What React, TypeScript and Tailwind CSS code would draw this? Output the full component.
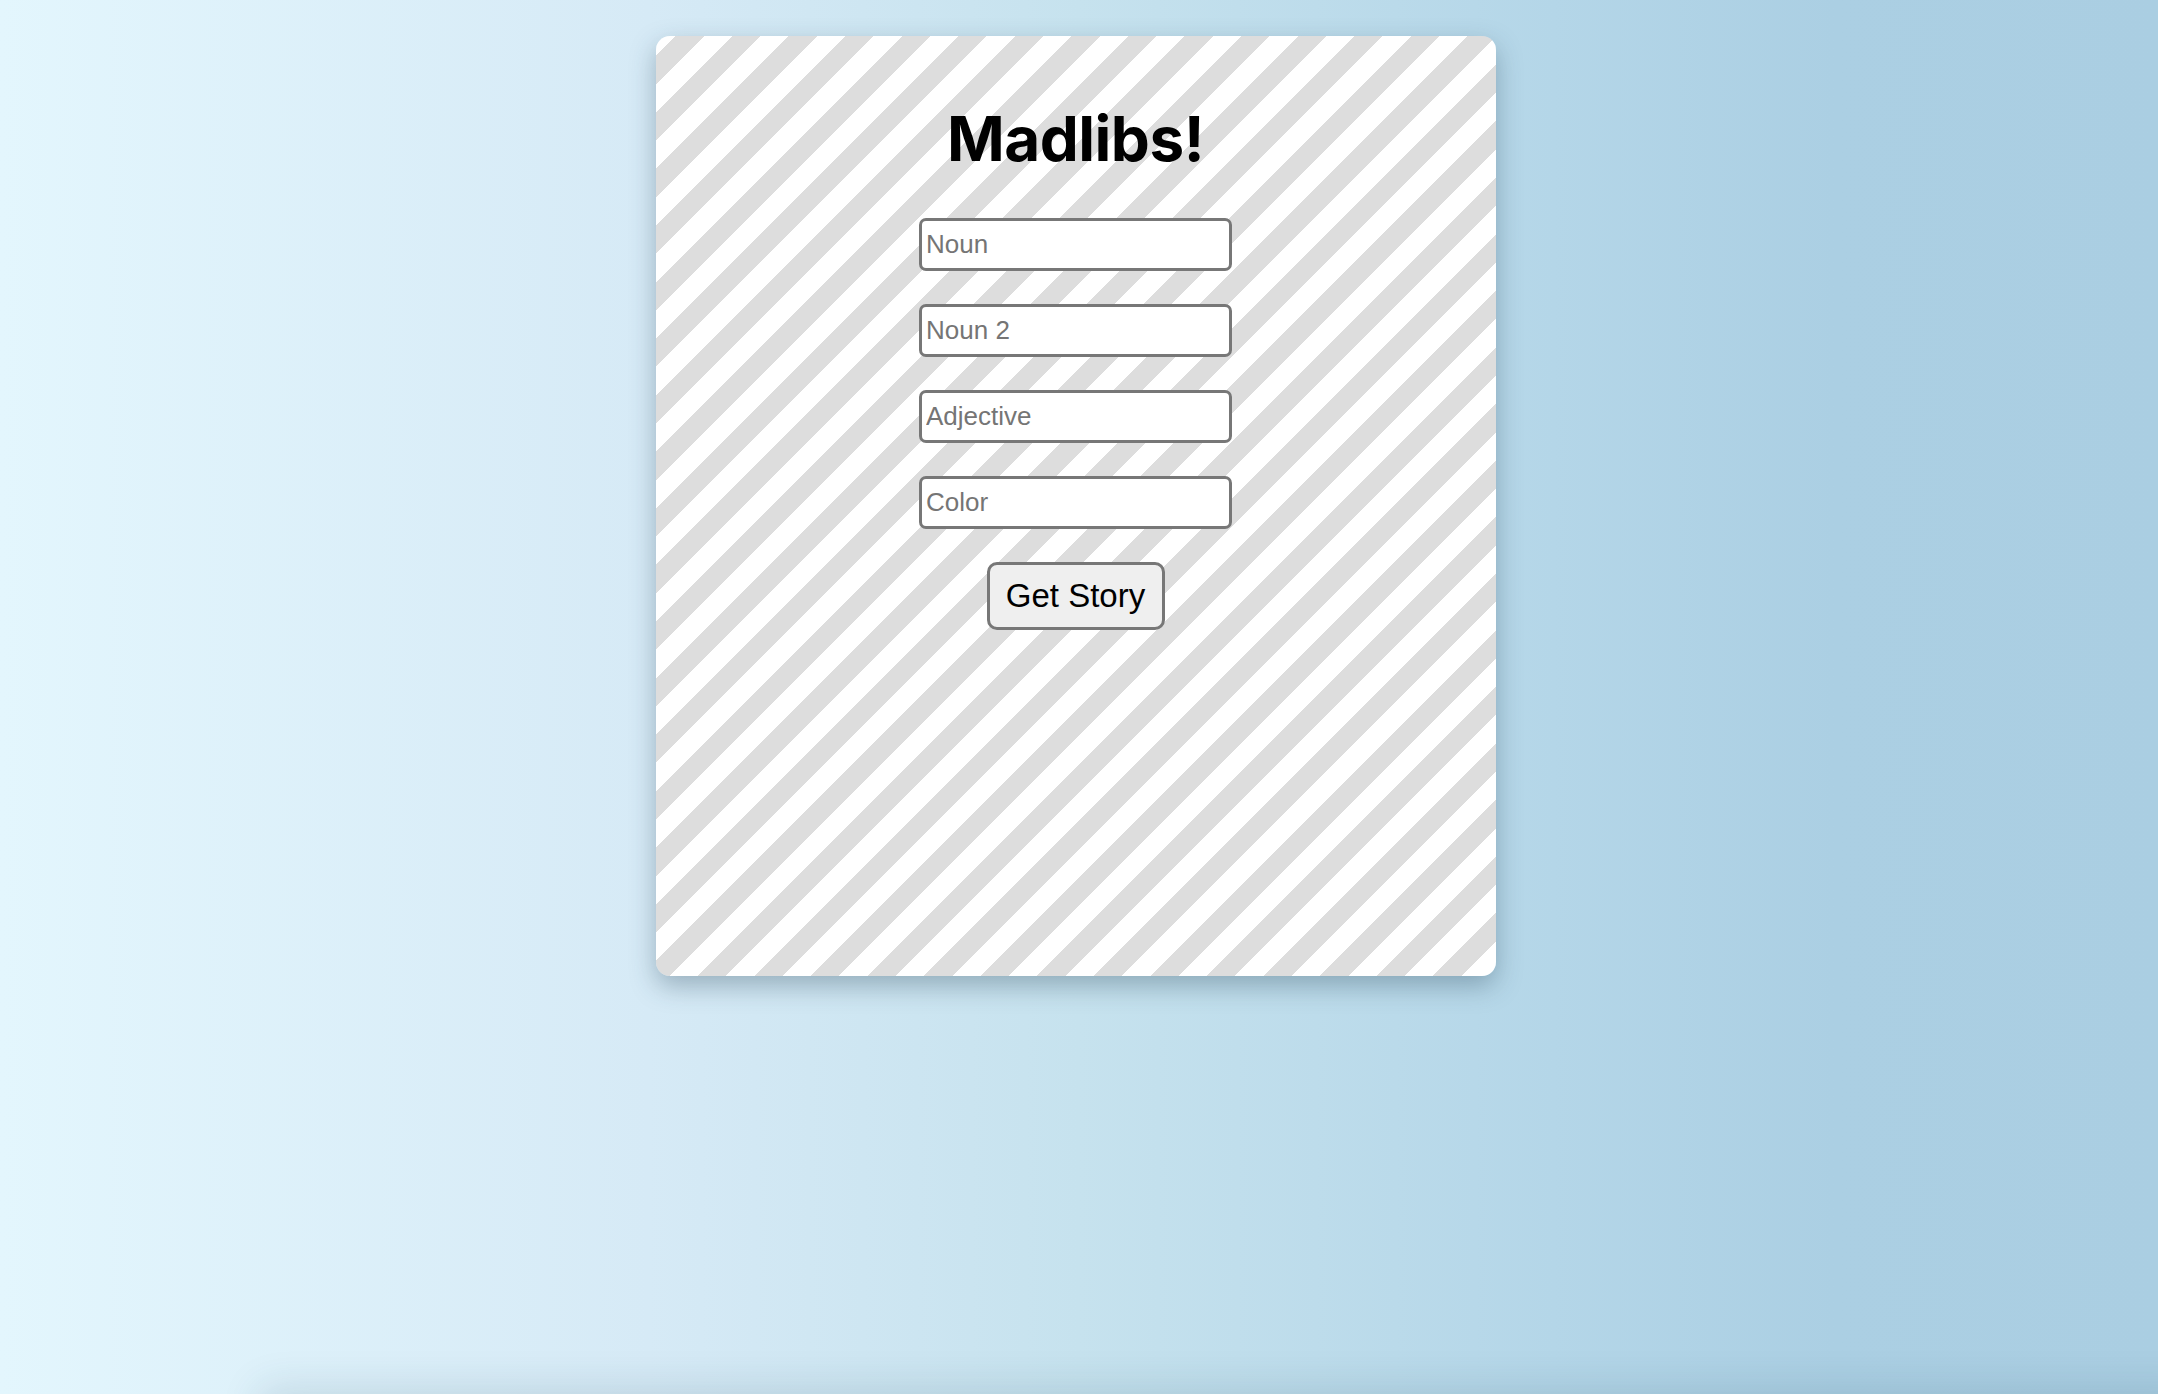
import { useState } from "react";

const fields = [
  { name: "noun", placeholder: "Noun" },
  { name: "noun2", placeholder: "Noun 2" },
  { name: "adjective", placeholder: "Adjective" },
  { name: "color", placeholder: "Color" },
];

export default function App() {
  const [values, setValues] = useState<Record<string, string>>({});

  return (
    <div className="relative min-h-screen overflow-hidden bg-[linear-gradient(to_right,#e3f6fd_0%,#d6eaf6_30%,#c6e2ee_50%,#b4d6e8_72%,#abcfe3_85%,#aacee2_100%)]">
      <div className="flex flex-col items-center pr-[7px] pt-[36px]">
        {/* Card */}
        <div className="flex h-[940px] w-[840px] flex-col items-center rounded-[14px] bg-[repeating-linear-gradient(135deg,#ffffff_0px,#ffffff_14px,#dddddd_14px,#dddddd_34px,#ffffff_34px,#ffffff_40px)] pt-[72px] shadow-[0_10px_26px_rgba(40,70,90,0.35)]">
          <h1 className="font-['Inter',sans-serif] text-[62px] font-bold leading-none tracking-[-0.5px] text-black">
            Madlibs!
          </h1>

          <div className="mt-[48px] flex flex-col items-center gap-[33px]">
            {fields.map((f) => (
              <input
                key={f.name}
                type="text"
                placeholder={f.placeholder}
                value={values[f.name] ?? ""}
                onChange={(e) => setValues((prev) => ({ ...prev, [f.name]: e.target.value }))}
                className="h-[53px] w-[313px] rounded-[7px] border-[3px] border-[#777777] bg-white px-[4px] font-['Liberation_Sans',Arial,sans-serif] text-[26px] text-black outline-none placeholder:text-[#757575]"
              />
            ))}
          </div>

          <button
            type="button"
            className="mt-[33px] h-[68px] w-[178px] rounded-[10px] border-[3px] border-[#777777] bg-[#efefef] font-['Liberation_Sans',Arial,sans-serif] text-[33px] text-black"
          >
            Get Story
          </button>
        </div>
      </div>

      <div className="pointer-events-none absolute left-[260px] right-[-40px] top-full h-[120px] shadow-[0_-6px_40px_rgba(30,70,90,0.14)]" />
    </div>
  );
}
